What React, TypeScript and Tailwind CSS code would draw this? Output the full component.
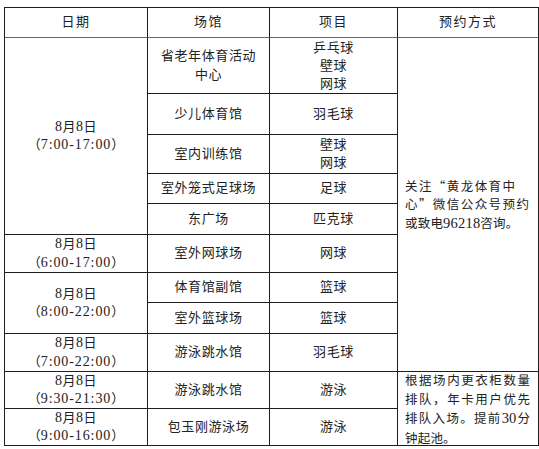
import React from "react";

const font = {
  fontFamily: '"Liberation Serif", "Noto Sans CJK SC", serif',
};
const cjk = {
  fontFamily: '"Noto Sans CJK SC", "Liberation Serif", sans-serif',
};

function Cell({
  children,
  className = "",
}: {
  children: React.ReactNode;
  className?: string;
}) {
  return (
    <div
      className={
        "flex items-center justify-center text-center border-r border-b border-[#1e1e1e] leading-[18.5px] tracking-[0.6px] " +
        className
      }
    >
      <div>{children}</div>
    </div>
  );
}

function DateCell({ time, className = "" }: { time: string; className?: string }) {
  return (
    <Cell className={className}>
      <div>
        <span className="text-[14px] tracking-[0.4px]">8</span>月
        <span className="text-[14px] tracking-[0.4px]">8</span>日
      </div>
      <div className="whitespace-nowrap tracking-normal">
        （<span className="text-[14px] tracking-[0.9px]">{time}</span>）
      </div>
    </Cell>
  );
}

export default function App() {
  return (
    <div className="w-[539px] h-[449px] bg-white overflow-hidden" style={font}>
      <div className="ml-[4px] mt-[7px] w-[535px] border-l border-t border-[#1e1e1e] grid grid-cols-[143px_122px_128px_141px] grid-rows-[30px_56px_41px_39px_30px_31px_38px_30px_31px_38px_37px_37px] text-[13px] text-[#222]">
        {/* header */}
        <Cell className="col-start-1 row-start-1 tracking-[1.5px] border-b-[#666]">日期</Cell>
        <Cell className="col-start-2 row-start-1 tracking-[1.5px] border-b-[#666]">场馆</Cell>
        <Cell className="col-start-3 row-start-1 tracking-[1.5px] border-b-[#666]">项目</Cell>
        <Cell className="col-start-4 row-start-1 tracking-[1.5px] border-b-[#666]">预约方式</Cell>

        {/* date column */}
        <DateCell time="7:00-17:00" className="col-start-1 row-start-2 row-span-5" />
        <DateCell time="6:00-17:00" className="col-start-1 row-start-7" />
        <DateCell time="8:00-22:00" className="col-start-1 row-start-8 row-span-2" />
        <DateCell time="7:00-22:00" className="col-start-1 row-start-10" />
        <DateCell time="9:30-21:30" className="col-start-1 row-start-11" />
        <DateCell time="9:00-16:00" className="col-start-1 row-start-12" />

        {/* venue column */}
        <Cell className="col-start-2 row-start-2 leading-[19px] pb-[1px]">
          <div>省老年体育活动</div>
          <div>中心</div>
        </Cell>
        <Cell className="col-start-2 row-start-3">少儿体育馆</Cell>
        <Cell className="col-start-2 row-start-4">室内训练馆</Cell>
        <Cell className="col-start-2 row-start-5">室外笼式足球场</Cell>
        <Cell className="col-start-2 row-start-6">东广场</Cell>
        <Cell className="col-start-2 row-start-7">室外网球场</Cell>
        <Cell className="col-start-2 row-start-8">体育馆副馆</Cell>
        <Cell className="col-start-2 row-start-9">室外篮球场</Cell>
        <Cell className="col-start-2 row-start-10">游泳跳水馆</Cell>
        <Cell className="col-start-2 row-start-11">游泳跳水馆</Cell>
        <Cell className="col-start-2 row-start-12">包玉刚游泳场</Cell>

        {/* item column */}
        <Cell className="col-start-3 row-start-2 leading-[18px]">
          <div>乒乓球</div>
          <div>壁球</div>
          <div>网球</div>
        </Cell>
        <Cell className="col-start-3 row-start-3">羽毛球</Cell>
        <Cell className="col-start-3 row-start-4">
          <div>壁球</div>
          <div>网球</div>
        </Cell>
        <Cell className="col-start-3 row-start-5">足球</Cell>
        <Cell className="col-start-3 row-start-6">匹克球</Cell>
        <Cell className="col-start-3 row-start-7">网球</Cell>
        <Cell className="col-start-3 row-start-8">篮球</Cell>
        <Cell className="col-start-3 row-start-9">篮球</Cell>
        <Cell className="col-start-3 row-start-10">羽毛球</Cell>
        <Cell className="col-start-3 row-start-11">游泳</Cell>
        <Cell className="col-start-3 row-start-12">游泳</Cell>

        {/* booking column */}
        <div className="col-start-4 row-start-2 row-span-9 border-r border-b border-[#1e1e1e] flex items-center pl-[7px] text-[12.5px] leading-[18.5px] whitespace-nowrap">
          <div>
            <div className="w-[110px] [text-align-last:justify]" style={cjk}>关注“黄龙体育中</div>
            <div className="w-[124px] [text-align-last:justify]" style={cjk}>心”微信公众号预约</div>
            <div className="tracking-[0.2px]" style={cjk}>
              或致电<span className="text-[14.5px]" style={font}>96218</span>咨询。
            </div>
          </div>
        </div>
        <div className="col-start-4 row-start-11 row-span-2 border-r border-b border-[#1e1e1e] flex items-center pl-[7px] text-[12.5px] leading-[19px] whitespace-nowrap">
          <div className="-mt-[1px]">
            <div className="w-[125px] [text-align-last:justify]" style={cjk}>根据场内更衣柜数量</div>
            <div className="w-[125px] [text-align-last:justify]" style={cjk}>排队，年卡用户优先</div>
            <div className="w-[125px] [text-align-last:justify]" style={cjk}>
              排队入场。提前<span className="text-[14.5px]" style={font}>30</span>分
            </div>
            <div className="tracking-[0.2px]" style={cjk}>钟起池。</div>
          </div>
        </div>
      </div>
    </div>
  );
}
